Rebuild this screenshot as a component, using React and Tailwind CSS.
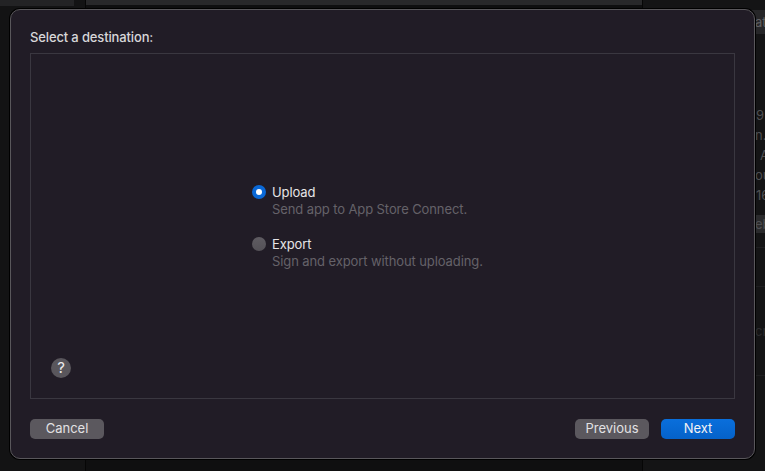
import React from "react";

// Background window that is dimmed behind the sheet
const Backdrop = () => (
  <div className="flex h-full w-full">
    <div className="flex w-[85px] shrink-0 flex-col bg-[#131314]">
      <div className="h-[6px] w-[74px] bg-[#232325]" />
    </div>
    <div className="w-px shrink-0 bg-[#060606]" />
    <div className="flex w-[556px] shrink-0 flex-col bg-[#0f0f10]">
      <div className="h-[5px] bg-[#28282a]" />
    </div>
    <div className="w-px shrink-0 bg-[#060606]" />
    <div className="flex w-[122px] shrink-0 flex-col overflow-hidden whitespace-nowrap bg-[#141415] text-[13px] leading-[20px] text-[#4f4f52]">
      <div className="mt-[10px] flex h-[24px] items-center bg-[#262628] pl-[112px] text-[#606062]">ate</div>
      <div className="mt-[71px] pl-[113px]">9</div>
      <div className="pl-[112px]">n.i</div>
      <div className="pl-[117px]">A</div>
      <div className="pl-[112px]">ou</div>
      <div className="pl-[113px]">16</div>
      <div className="mt-[10px] h-[18px] bg-[#2a2a2c] pl-[112px] leading-[18px]">eb</div>
      <div className="mt-[14px] h-px bg-[#1e1e20]" />
      <div className="mt-[38px] h-px bg-[#1e1e20]" />
      <div className="mt-[34px] pl-[112px] text-[#2c2c2e]">cri</div>
      <div className="mt-[34px] h-px bg-[#1e1e20]" />
    </div>
  </div>
);

const RadioOption = ({ selected, title, subtitle }) => (
  <div className="flex gap-[6px]">
    {selected ? (
      <div className="mt-[2px] flex h-[14px] w-[14px] items-center justify-center rounded-full bg-[#0a68d6]">
        <div className="h-[6px] w-[6px] rounded-full bg-white" />
      </div>
    ) : (
      <div className="mt-[2px] h-[14px] w-[14px] rounded-full bg-gradient-to-b from-[#5f5c62] to-[#545157]" />
    )}
    <div className="flex flex-col tracking-[-0.1px]">
      <span className="text-[13px] leading-[18px] text-[#e6e5e7]">{title}</span>
      <span className="text-[13px] leading-[16px] text-[#656269]">{subtitle}</span>
    </div>
  </div>
);

const Button = ({ primary, children }) => (
  <button
    className={
      primary
        ? "h-[20px] w-[74px] rounded-[5px] bg-gradient-to-b from-[#0a6fdc] to-[#0562c9] pb-[2px] text-[13px] leading-[18px] text-[#f2f2f4]"
        : "h-[20px] w-[74px] rounded-[5px] bg-[#5b585e] pb-[2px] text-[13px] leading-[18px] text-[#e2e1e3]"
    }
  >
    {children}
  </button>
);

export default function App() {
  return (
    <div className="relative h-[471px] w-[765px] overflow-hidden bg-[#0f0f10] font-['Inter','Liberation_Sans',sans-serif]">
      <Backdrop />

      {/* Sheet */}
      <div className="absolute left-[10px] top-[9px] flex h-[450px] w-[745px] flex-col rounded-[10px] border border-[#59575b] bg-[#211c26] px-[19px] pb-[19px] shadow-[0_0_0_1px_#000]">
        <h2 className="mt-[19px] text-[13px] font-medium leading-[16px] tracking-[-0.14px] text-[#d8d7d9]">
          Select a destination:
        </h2>

        <div className="mt-[8px] flex h-[346px] flex-col border border-[#3a3740] pb-[20px] pl-[20px]">
          <div className="ml-[201px] mt-[129px] flex flex-col gap-[18px]">
            <RadioOption selected title="Upload" subtitle="Send app to App Store Connect." />
            <RadioOption title="Export" subtitle="Sign and export without uploading." />
          </div>
          <div className="mt-auto flex h-[20px] w-[20px] items-center justify-center rounded-full bg-[#59565c] text-[15px] leading-[20px] text-[#ecebed]">
            ?
          </div>
        </div>

        <div className="mt-[20px] flex items-center">
          <Button>Cancel</Button>
          <div className="ml-auto flex gap-[12px]">
            <Button>Previous</Button>
            <Button primary>Next</Button>
          </div>
        </div>
      </div>
    </div>
  );
}
